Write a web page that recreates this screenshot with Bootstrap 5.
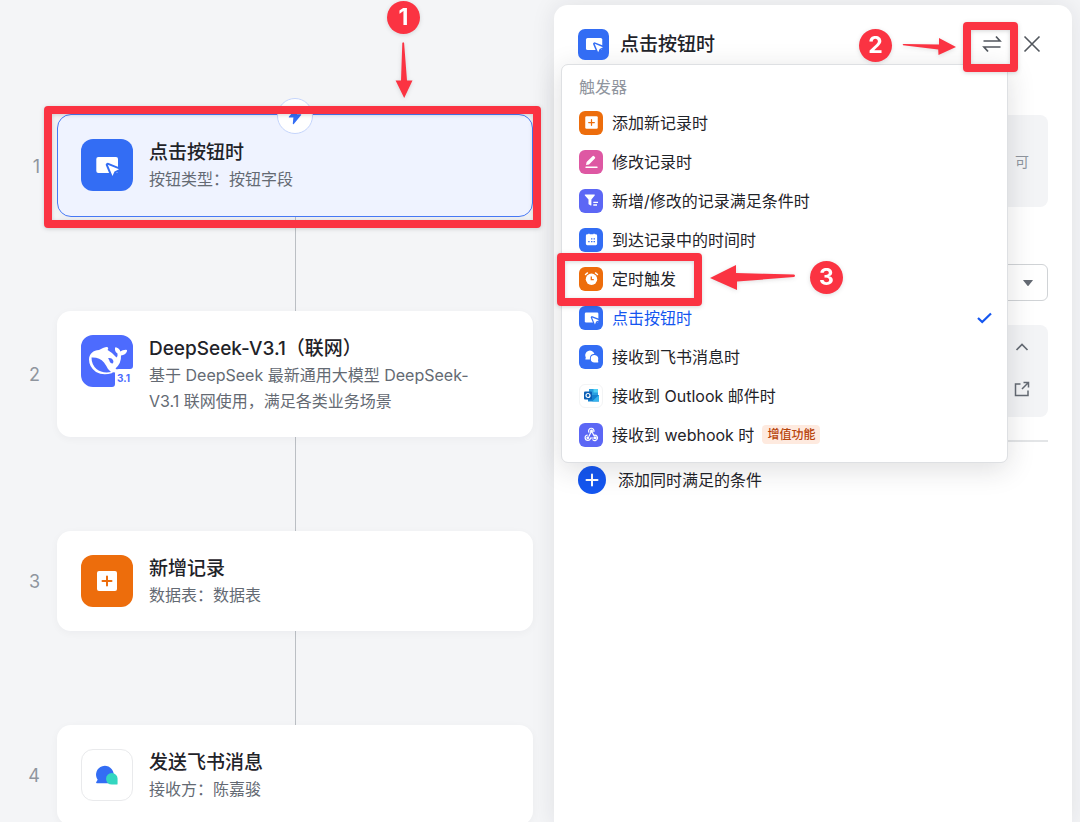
<!DOCTYPE html>
<html lang="zh-CN">
<head>
<meta charset="utf-8">
<meta name="viewport" content="width=device-width, initial-scale=1">
<title>自动化流程</title>
<link href="https://cdn.jsdelivr.net/npm/bootstrap@5.3.0/dist/css/bootstrap.min.css" rel="stylesheet">
<style>
:root{--ink:#1f2329;--sub:#646a73;--mute:#8f959e;--blue:#336df4;--link:#1456f0;--orange:#ed6d0c;--pink:#de58a3;--violet:#5c67f5;--mark:#fb3342}
body{background:#f4f5f7;color:var(--ink);font-family:Inter,"Noto Sans CJK SC",sans-serif;font-size:16px;line-height:26px}
.workspace{display:grid;grid-template-columns:554fr 518fr;height:100vh;padding-right:8px;overflow:hidden}
.flow{padding:114px 21px 0 0}
.step{display:grid;grid-template-columns:57px minmax(0,1fr);align-items:center}
.step-no{padding:2px 17px 0 0;text-align:right;color:var(--mute);font-size:18px}
.node{border:1px solid transparent;border-radius:14px;background:#fff;padding:23px 23px 22px;gap:16px;box-shadow:0 2px 8px #1f23290a}
.node.selected{border-color:#4779f5;background:#eff3ff;padding-top:24px;min-height:103px}
.node h2{font-size:19px;line-height:26px;font-weight:500;margin:0;padding-top:1px}
.node p{margin:0;padding-right:32px;color:var(--sub)}
.link-line{width:1px;height:94px;background:#bbbfc4;margin-left:calc(57px + (100% - 57px)/2)}
.tile{display:flex;align-items:center;justify-content:center;flex:none;width:24px;height:24px;border-radius:6px;color:#fff;background:var(--blue)}
.tile svg{width:15px;height:15px}
.tile-lg{width:52px;height:52px;border-radius:12px}
.tile-lg svg{width:24px;height:24px}
.tile-lg svg.full{width:52px;height:52px}
.tile-md{width:31px;height:31px;border-radius:7px}
.tile-md svg{width:18px;height:18px}
.t-orange{background:var(--orange)}
.t-pink{background:var(--pink)}
.t-violet{background:var(--violet)}
.t-plain{background:#fff;border:1px solid #e9eaec}
.t-faint{border-color:#f3f4f5}
.bolt{width:36px;height:36px;top:-16px;left:calc(50% - 18px);border:1px solid #c5d5fc;border-radius:50%;background:#fff}
.side{margin-top:5px;padding:23px 24px 0;background:#fff;border-radius:14px 14px 0 0;box-shadow:0 0 24px #1f232918}
.side header{z-index:1010}
.side h1{font-size:19px;line-height:31px;font-weight:500;margin:0 0 0 11px;padding-top:1px}
.icon-btn{border:0;background:none;padding:0;width:24px;height:24px;display:flex;align-items:center;justify-content:center;color:#51565d}
.tip-box{height:92px;margin-top:55px;padding:34px 19px;background:#f3f4f6;border-radius:8px;color:var(--mute);font-size:14px}
.field-select{height:37px;margin-top:57px;border-color:#d0d3d6;border-radius:6px;background-position:right 13px center;background-size:12px 8px;background-image:url("data:image/svg+xml,%3Csvg xmlns='http://www.w3.org/2000/svg' viewBox='0 0 12 8'%3E%3Cpath d='M1.5 1h9Q11 1 10.700 1.500L6.500 6.800Q6 7.300 5.500 6.800L1.300 1.500Q1 1 1.500 1z' fill='%23646a73'/%3E%3C/svg%3E")}
.cond-box{height:92px;margin-top:24px;padding:10px 14px 16px;background:#f3f4f6;border-radius:8px}
.cond-box .icon-btn{color:var(--sub)}
.rule{height:2px;margin:23px 0 24px;background:#e3e5e7}
.add-btn{border:0;background:none;padding:0;gap:12px;color:var(--ink)}
.add-dot{width:28px;height:28px;border-radius:50%;background:var(--link)}
.trigger-menu{top:59px;left:7px;right:64px;padding:9px 0 8px;border:1px solid #dee0e3;border-radius:7px;box-shadow:0 6px 28px #1f232926;font-size:16px;color:var(--ink)}
.trigger-menu h6{padding:0 17px;margin:0 0 3px;font-size:16px;line-height:26px;font-weight:400;color:var(--mute)}
.trigger-menu .dropdown-item{padding:0 15px 0 17px;height:39px;gap:9px;color:inherit}
.trigger-menu .dropdown-item[aria-current]{color:var(--link)}
.paid{padding:0 5px;margin-left:-1px;border-radius:4px;background:#feeadf;color:#b8440b;font-size:12px;font-weight:500;line-height:19px}
.frame{border:8px solid var(--mark);border-radius:4px;pointer-events:none;z-index:5;filter:drop-shadow(0 1px 2px #1f232930)}
.frame-card{inset:-8px -8px -11px -13px}
.frame-swap{inset:-10px -14px -16px -17px}
.frame-item{top:-6px;bottom:-8px;left:-5px;width:145px}
.hint{pointer-events:none;gap:7px;color:var(--mark);filter:drop-shadow(0 1px 2px #1f232926)}
.hint b{width:33px;height:33px;border-radius:50%;background:var(--mark);color:#fff;font-size:23px;line-height:33px;text-align:center;font-weight:700}
.hint-1{top:-113px;right:113px}
.hint-2{top:-3px;right:48px;gap:10px}
.hint-3{top:2px;left:148px;gap:14px}
</style>
</head>
<body>
<svg class="d-none" aria-hidden="true">
  <symbol id="g-click" viewBox="14 14 24 24"><rect x="15.300" y="18" width="21.700" height="16" rx="2" fill="currentColor"/><path d="M26.800 25.800 38 30.300 33.500 32.500 31.500 37z" fill="currentColor" stroke="#336df4" stroke-width="4" stroke-linejoin="round" paint-order="stroke"/></symbol>
  <symbol id="g-plus" viewBox="0 0 24 24"><rect x="2" y="2" width="20" height="20" rx="2" fill="currentColor"/><path d="M12 7.500v9M7.500 12h9" stroke="#ed6d0c" stroke-width="2" stroke-linecap="round"/></symbol>
</svg>

<div class="workspace">
  <main class="flow">
    <div class="step">
      <span class="step-no">1</span>
      <div class="position-relative">
        <section class="node selected d-flex">
          <span class="tile tile-lg"><svg><use href="#g-click"/></svg></span>
          <div><h2>点击按钮时</h2><p>按钮类型：按钮字段</p></div>
        </section>
        <span class="bolt position-absolute d-flex align-items-center justify-content-center"><svg width="16" height="18" viewBox="0 0 16 18"><path d="M9.500 1 2 9.500c-.4.500-.2 1 .4 1h4L5.800 16.500c0 .7.600.9 1 .4L14 8.300c.4-.5.200-1-.4-1H10L10.500 1.500C10.500.8 10 .5 9.500 1z" fill="#336df4"/></svg></span>
        <div class="frame frame-card position-absolute"></div>
        <div class="hint hint-1 position-absolute d-flex flex-column align-items-center"><b>1</b><svg width="18" height="58" viewBox="0 0 18 58"><path d="M7.300 2q1-1.500 1.800 0L12 39.500h5.500L9.200 57 .6 39.500H6z" fill="currentColor"/></svg></div>
      </div>
    </div>
    <div class="link-line"></div>
    <div class="step">
      <span class="step-no">2</span>
      <section class="node d-flex">
        <svg class="flex-shrink-0" width="52" height="52" viewBox="0 0 52 52" role="img" aria-label="DeepSeek 3.1">
          <path d="M12 0h28a12 12 0 0 1 12 12v19q0 3-3 3H38q-4 0-4 4v11q0 3-3 3H12A12 12 0 0 1 0 40V12A12 12 0 0 1 12 0z" fill="#4d6bfe"/>
          <path d="M8 24.500C8 19 12.500 15 18 15l4-2q4-1.400 5-.6.700.8-.4 2.600Q32 18 35.500 22.500 37 21 36.500 18.500 33.500 16.500 34 13q.4-1.300 1.500-.5 3.500 1.500 3.700 4 2.300-1.800 6-1.700 1.300.2.800 1.500-1.500 4-6 4.200Q40.500 28 34.500 33.500l3.200 2.500q0 1.600-4 1.400-2-.4-3 .8Q22 41 15 37 8 32 8 24.500z" fill="#fff"/>
          <path d="M10.500 22.500q8-.5 12.500 5 2.500 3.500 4 6.500l3 3Q21 38.500 15.500 34 10.500 29.500 10.500 22.500z" fill="#4d6bfe"/>
          <path d="M27 23.200q3.500-.8 5 1.800 1.200 2.300-.4 3.500-2 .2-2.800-1.800-.4-1.800-1.800-3.500z" fill="#4d6bfe"/>
          <text x="36" y="46.500" font-size="10" font-weight="700" fill="#4d6bfe" font-family="Inter,sans-serif">3.1</text>
        </svg>
        <div><h2>DeepSeek-V3.1（联网）</h2><p>基于 DeepSeek 最新通用大模型 DeepSeek-<wbr>V3.1 联网使用，满足各类业务场景</p></div>
      </section>
    </div>
    <div class="link-line"></div>
    <div class="step">
      <span class="step-no">3</span>
      <section class="node d-flex">
        <span class="tile tile-lg t-orange"><svg><use href="#g-plus"/></svg></span>
        <div><h2>新增记录</h2><p>数据表：数据表</p></div>
      </section>
    </div>
    <div class="link-line"></div>
    <div class="step">
      <span class="step-no">4</span>
      <section class="node d-flex">
        <span class="tile tile-lg t-plain"><svg class="full" viewBox="0 0 52 52"><path d="M15.500 34.500q-1 0-.8-1l1.600-2.500A9.200 9.200 0 1 1 33 26l-2 8.500z" fill="#336df4"/><path d="M31 24a6 6 0 0 1 6 6v5q0 1-1 1h-5a6 6 0 0 1 0-12z" fill="#33d6c0"/></svg></span>
        <div><h2>发送飞书消息</h2><p>接收方：陈嘉骏</p></div>
      </section>
    </div>
  </main>

  <aside class="side position-relative">
    <header class="position-relative d-flex align-items-center">
      <span class="tile tile-md"><svg><use href="#g-click"/></svg></span>
      <h1>点击按钮时</h1>
      <div class="position-relative ms-auto">
        <button class="icon-btn" type="button" aria-label="切换触发器"><svg width="20" height="18" viewBox="0 0 20 18" fill="none" stroke="currentColor" stroke-width="1.700"><path d="M1.500 6H18l-4-4.500M18.500 12H2l4 4.500"/></svg></button>
        <div class="frame frame-swap position-absolute"></div>
        <div class="hint hint-2 position-absolute d-flex align-items-center"><b>2</b><svg width="54" height="18" viewBox="0 0 54 18"><path d="M1 8.200Q0 7 1.500 6.900L37 7.500V1l17 9-17.500 8-.3-5.600z" fill="currentColor"/></svg></div>
      </div>
      <button class="icon-btn ms-3 me-1" type="button" aria-label="关闭"><svg width="18" height="18" viewBox="0 0 18 18" stroke="currentColor" stroke-width="1.600"><path d="m1.500 1.500 15 15m0-15-15 15"/></svg></button>
    </header>
    <div class="tip-box text-end">可</div>
    <select class="form-select field-select" aria-label="按钮字段"><option></option></select>
    <div class="cond-box d-flex flex-column align-items-end justify-content-between">
      <button class="icon-btn" type="button" aria-label="收起"><svg width="14" height="10" viewBox="0 0 14 10" fill="none" stroke="currentColor" stroke-width="1.700"><path d="m1.500 8 5.500-5.500L12.500 8"/></svg></button>
      <button class="icon-btn" type="button" aria-label="打开"><svg width="16" height="16" viewBox="0 0 16 16" fill="none" stroke="currentColor" stroke-width="1.500"><path d="M6.500 3H1.500v11.500H14V9.500M9.500 1.500h5v5M14.200 1.800 8 8"/></svg></button>
    </div>
    <div class="rule"></div>
    <button class="add-btn d-flex align-items-center" type="button"><span class="add-dot d-flex align-items-center justify-content-center"><svg width="14" height="14" viewBox="0 0 14 14" stroke="#fff" stroke-width="2" stroke-linecap="round"><path d="M7 1.500v11M1.500 7h11"/></svg></span>添加同时满足的条件</button>

    <div class="trigger-menu dropdown-menu show">
      <h6>触发器</h6>
      <button class="dropdown-item d-flex align-items-center" type="button"><span class="tile t-orange"><svg><use href="#g-plus"/></svg></span>添加新记录时</button>
      <button class="dropdown-item d-flex align-items-center" type="button"><span class="tile t-pink"><svg viewBox="0 0 15 15"><path d="m2 11 .6-3L8.500 2.200q.8-.8 1.600 0l.8.8q.7.700 0 1.500L5 10.400z" fill="#fff"/><path d="M2 13.200h11" stroke="#fff" stroke-width="1.400" stroke-linecap="round"/></svg></span>修改记录时</button>
      <button class="dropdown-item d-flex align-items-center" type="button"><span class="tile t-violet"><svg viewBox="0 0 15 15"><path d="M1.300 1.500h9q1 0 .4.900L7.400 6.500V12q0 .8-.7.500L5 11.500q-.5-.3-.5-.8V6.500L.9 2.400q-.6-.9.400-.9z" fill="#fff"/><path d="M9.300 9.300H14M9.300 12H13" stroke="#fff" stroke-width="1.300"/></svg></span>新增/修改的记录满足条件时</button>
      <button class="dropdown-item d-flex align-items-center" type="button"><span class="tile"><svg viewBox="-.5 -.5 16 16"><path d="M3 2h1V1.300h1.500V2h4v-.7H11V2h1q1.500 0 1.500 1.500v8.500q0 1.500-1.500 1.500H3q-1.500 0-1.500-1.500V3.500Q1.500 2 3 2z" fill="#fff"/><path d="M7 6.800h1.500M9.700 6.800h1.500M4 9.800h1.500M7 9.800h1.500M9.700 9.800h1.500" stroke="#336df4" stroke-width="1.500"/></svg></span>到达记录中的时间时</button>
      <div class="position-relative">
        <button class="dropdown-item d-flex align-items-center" type="button"><span class="tile t-orange"><svg viewBox="0 0 15 15"><circle cx="7.500" cy="8.300" r="5.700" fill="#fff"/><path d="M1.500 3.500 3.500 1.900M13.500 3.500 11.500 1.900" stroke="#fff" stroke-width="1.400" stroke-linecap="round"/><path d="M7.300 5.500v3.200h2.500" fill="none" stroke="#ed6d0c" stroke-width="1.300"/></svg></span>定时触发</button>
        <div class="frame frame-item position-absolute"></div>
        <div class="hint hint-3 position-absolute d-flex align-items-center"><svg width="86" height="28" viewBox="0 0 86 28"><path d="M0 14 26 1v8L84 10.500q2 1 0 2.600L27 17.500v8.500z" fill="currentColor"/></svg><b>3</b></div>
      </div>
      <button class="dropdown-item d-flex align-items-center" type="button" aria-current="true"><span class="tile"><svg><use href="#g-click"/></svg></span>点击按钮时<svg class="ms-auto" width="15" height="12" viewBox="0 0 15 12" fill="none" stroke="#1456f0" stroke-width="2.200"><path d="m1 6 4.200 4L14 1.500"/></svg></button>
      <button class="dropdown-item d-flex align-items-center" type="button"><span class="tile"><svg viewBox="0 0 15 15"><path d="M1.800 10.500q-.6 0-.4-.5l.4-1.500A4.700 4.700 0 1 1 10.400 4.800 4.800 4.800 0 0 0 5.900 9.500v1z" fill="#fff"/><path d="M10.500 6a3.700 3.700 0 0 1 3.500 5l.3 1.900q0 .6-.6.600h-3.200a3.700 3.700 0 0 1 0-7.500z" fill="#fff"/></svg></span>接收到飞书消息时</button>
      <button class="dropdown-item d-flex align-items-center" type="button"><span class="tile t-plain t-faint"><svg viewBox="0 0 15 15"><path d="M5 1h9v6H5z" fill="#2a9fe0"/><path d="M9.500 1H14v3.500H9.500z" fill="#50d0f5"/><path d="M4 7h11v6.500H4z" fill="#1482d0"/><path d="m15 7-7 6.500h7z" fill="#36b5ee"/><rect y="3.500" width="8" height="8" rx="1" fill="#0a5eb5"/><circle cx="4" cy="7.500" r="2" fill="none" stroke="#fff" stroke-width="1.200"/></svg></span>接收到 Outlook 邮件时</button>
      <button class="dropdown-item d-flex align-items-center" type="button"><span class="tile t-violet"><svg viewBox="0 0 15 15" fill="none" stroke="#fff" stroke-width="1.200" stroke-linecap="round"><path d="M4.900 5.200a2.700 2.700 0 1 1 5-.6M7.500 4 5 9.200M7.500 4l2.700 5M3.300 8a2.700 2.700 0 1 0 3.200 3h5M8.900 12.800a2.700 2.700 0 1 0 1.800-4.600"/><circle cx="7.500" cy="4" r=".8" fill="#fff"/><circle cx="3.800" cy="10.800" r=".8" fill="#fff"/><circle cx="11.300" cy="10.900" r=".8" fill="#fff"/></svg></span>接收到 webhook 时<span class="paid">增值功能</span></button>
    </div>
  </aside>
</div>
<script src="https://cdn.jsdelivr.net/npm/bootstrap@5.3.0/dist/js/bootstrap.bundle.min.js"></script>
</body>
</html>
